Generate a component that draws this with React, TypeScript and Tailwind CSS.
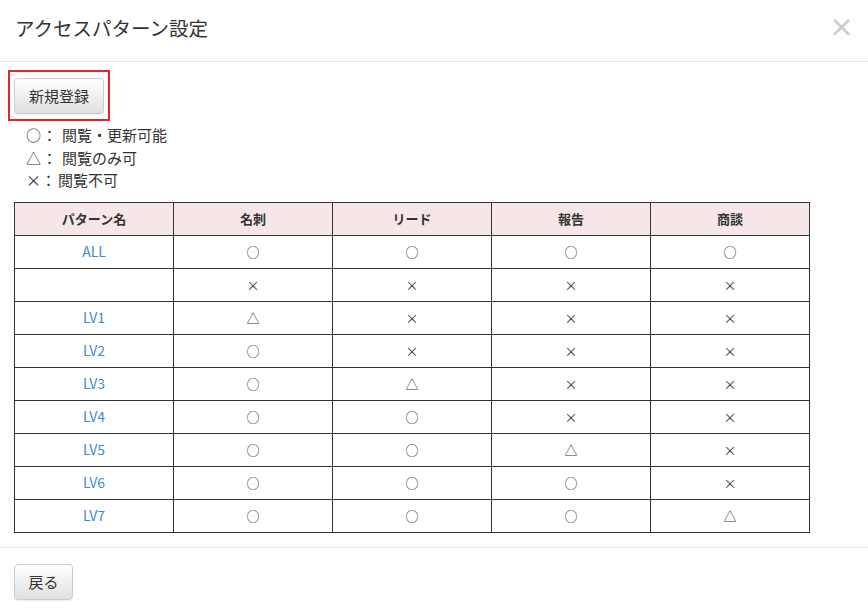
import React from "react";

type Mark = "○" | "△" | "×";

const columns = ["名刺", "リード", "報告", "商談"];

const rows: { name: string; marks: Mark[] }[] = [
  { name: "ALL", marks: ["○", "○", "○", "○"] },
  { name: "", marks: ["×", "×", "×", "×"] },
  { name: "LV1", marks: ["△", "×", "×", "×"] },
  { name: "LV2", marks: ["○", "×", "×", "×"] },
  { name: "LV3", marks: ["○", "△", "×", "×"] },
  { name: "LV4", marks: ["○", "○", "×", "×"] },
  { name: "LV5", marks: ["○", "○", "△", "×"] },
  { name: "LV6", marks: ["○", "○", "○", "×"] },
  { name: "LV7", marks: ["○", "○", "○", "△"] },
];

const legend = [
  { mark: "○", label: "閲覧・更新可能", markWidth: "w-[16px]", labelGap: "ml-[5px]" },
  { mark: "△", label: "閲覧のみ可", markWidth: "w-[16px]", labelGap: "ml-[5px]" },
  { mark: "×", label: "閲覧不可", markWidth: "w-[15px]", labelGap: "ml-[2px]" },
];

const font = "font-['Noto_Sans_CJK_JP','Noto_Sans',sans-serif]";

function GrayButton({ label, className = "" }: { label: string; className?: string }) {
  return (
    <button
      className={`h-[36px] rounded-[4px] border border-[#cccccc] bg-gradient-to-b from-white to-[#e0e0e0] text-[15px] text-[#333] shadow-[inset_0_1px_0_rgba(255,255,255,0.15),0_1px_1px_rgba(0,0,0,0.075)] ${className}`}
    >
      {label}
    </button>
  );
}

export default function App() {
  return (
    <div className={`flex h-[616px] w-[868px] flex-col bg-white text-[#333] ${font}`}>
      <header className="flex h-[62px] shrink-0 items-center justify-between border-b border-[#e5e5e5] pb-[6px] pl-[15px] pr-[14px]">
        <h1 className="text-[19.5px] font-normal leading-none text-[#333]">アクセスパターン設定</h1>
        <span className="-mt-[2px] text-[25px] font-bold leading-none text-[#cccccc]">×</span>
      </header>

      <main className="flex-1 px-[14px] pt-[8px]">
        <div className="-ml-[6px] inline-block border-2 border-[#e8212b] px-[4px] pb-[5px] pt-[6px]">
          <GrayButton label="新規登録" className="w-[90px]" />
        </div>

        <ul className="mt-[3px] pl-[12px] text-[15px] leading-[22.5px]">
          {legend.map((item) => (
            <li key={item.mark} className="flex">
              <span className={item.markWidth}>{item.mark}</span>
              <span className="w-[15px] text-center">：</span>
              <span className={item.labelGap}>{item.label}</span>
            </li>
          ))}
        </ul>

        <table className="mt-[10px] w-[796px] table-fixed border-collapse text-[13px]">
          <thead>
            <tr className="h-[33px] bg-[#f7e6e7]">
              <th className="border border-[#333] font-bold">パターン名</th>
              {columns.map((col) => (
                <th key={col} className="border border-[#333] font-bold">
                  {col}
                </th>
              ))}
            </tr>
          </thead>
          <tbody>
            {rows.map((row, i) => (
              <tr key={i} className="h-[33px]">
                <td className="border border-[#333] text-center text-[14px] text-[#428bca]">{row.name}</td>
                {row.marks.map((mark, j) => (
                  <td key={j} className="border border-[#333] text-center">
                    {mark}
                  </td>
                ))}
              </tr>
            ))}
          </tbody>
        </table>
      </main>

      <footer className="h-[69px] shrink-0 border-t border-[#e5e5e5] px-[14px] pt-[16px]">
        <GrayButton label="戻る" className="w-[59px]" />
      </footer>
    </div>
  );
}
